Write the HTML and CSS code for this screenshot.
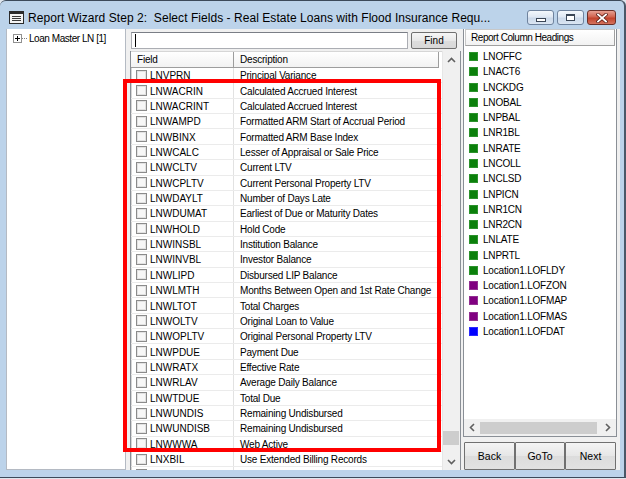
FILE: index.html
```html
<!DOCTYPE html>
<html>
<head>
<meta charset="utf-8">
<title>Report Wizard Step 2</title>
<link rel="stylesheet" href="styles.css">
</head>
<body>
<div class="window">
  <div class="titlebar">
    <svg class="appicon" width="15" height="13" viewBox="0 0 15 13">
      <rect x="0.5" y="1.5" width="14" height="11" fill="#f4f4f4" stroke="#2b2b2b"/>
      <rect x="0" y="0" width="15" height="3" fill="#2b2b2b"/>
      <path d="M3 5.5h9M3 7.5h9M3 9.5h9" stroke="#3a3a3a" stroke-width="1"/>
    </svg>
    <div class="title">Report Wizard Step 2:&nbsp; Select Fields - Real Estate Loans with Flood Insurance Requ...</div>
    <div class="controls">
      <div class="cbtn min"><span class="minbar"></span></div>
      <div class="cbtn max"><span class="maxbox"></span></div>
      <div class="cbtn close">
        <svg width="12" height="10" viewBox="0 0 12 10">
          <path d="M2 1.5l8 7M10 1.5l-8 7" stroke="#5a1f18" stroke-width="3.4" stroke-linecap="square"/>
          <path d="M2 1.5l8 7M10 1.5l-8 7" stroke="#ffffff" stroke-width="1.8" stroke-linecap="square"/>
        </svg>
      </div>
    </div>
  </div>

  <div class="client">
    <div class="tree">
      <div class="node">
        <span class="plus"><span class="ph"></span><span class="pv"></span></span>
        <span class="dots"></span>
        <span class="label">Loan Master LN [1]</span>
      </div>
    </div>

    <div class="middle">
      <div class="search">
        <div class="input"><span class="caret"></span></div>
        <div class="btn find">Find</div>
      </div>
      <div class="grid">
        <div class="table">
          <div class="head">
            <div class="hc c1">Field</div>
            <div class="hc c2">Description</div>
          </div>
          <div class="rows">
            <div class="row"><div class="cell c1"><span class="chk"></span><span class="ft">LNVPRN</span></div><div class="cell c2">Principal Variance</div></div>
            <div class="row"><div class="cell c1"><span class="chk"></span><span class="ft">LNWACRIN</span></div><div class="cell c2">Calculated Accrued Interest</div></div>
            <div class="row"><div class="cell c1"><span class="chk"></span><span class="ft">LNWACRINT</span></div><div class="cell c2">Calculated Accrued Interest</div></div>
            <div class="row"><div class="cell c1"><span class="chk"></span><span class="ft">LNWAMPD</span></div><div class="cell c2">Formatted ARM Start of Accrual Period</div></div>
            <div class="row"><div class="cell c1"><span class="chk"></span><span class="ft">LNWBINX</span></div><div class="cell c2">Formatted ARM Base Index</div></div>
            <div class="row"><div class="cell c1"><span class="chk"></span><span class="ft">LNWCALC</span></div><div class="cell c2">Lesser of Appraisal or Sale Price</div></div>
            <div class="row"><div class="cell c1"><span class="chk"></span><span class="ft">LNWCLTV</span></div><div class="cell c2">Current LTV</div></div>
            <div class="row"><div class="cell c1"><span class="chk"></span><span class="ft">LNWCPLTV</span></div><div class="cell c2">Current Personal Property LTV</div></div>
            <div class="row"><div class="cell c1"><span class="chk"></span><span class="ft">LNWDAYLT</span></div><div class="cell c2">Number of Days Late</div></div>
            <div class="row"><div class="cell c1"><span class="chk"></span><span class="ft">LNWDUMAT</span></div><div class="cell c2">Earliest of Due or Maturity Dates</div></div>
            <div class="row"><div class="cell c1"><span class="chk"></span><span class="ft">LNWHOLD</span></div><div class="cell c2">Hold Code</div></div>
            <div class="row"><div class="cell c1"><span class="chk"></span><span class="ft">LNWINSBL</span></div><div class="cell c2">Institution Balance</div></div>
            <div class="row"><div class="cell c1"><span class="chk"></span><span class="ft">LNWINVBL</span></div><div class="cell c2">Investor Balance</div></div>
            <div class="row"><div class="cell c1"><span class="chk"></span><span class="ft">LNWLIPD</span></div><div class="cell c2">Disbursed LIP Balance</div></div>
            <div class="row"><div class="cell c1"><span class="chk"></span><span class="ft">LNWLMTH</span></div><div class="cell c2">Months Between Open and 1st Rate Change</div></div>
            <div class="row"><div class="cell c1"><span class="chk"></span><span class="ft">LNWLTOT</span></div><div class="cell c2">Total Charges</div></div>
            <div class="row"><div class="cell c1"><span class="chk"></span><span class="ft">LNWOLTV</span></div><div class="cell c2">Original Loan to Value</div></div>
            <div class="row"><div class="cell c1"><span class="chk"></span><span class="ft">LNWOPLTV</span></div><div class="cell c2">Original Personal Property LTV</div></div>
            <div class="row"><div class="cell c1"><span class="chk"></span><span class="ft">LNWPDUE</span></div><div class="cell c2">Payment Due</div></div>
            <div class="row"><div class="cell c1"><span class="chk"></span><span class="ft">LNWRATX</span></div><div class="cell c2">Effective Rate</div></div>
            <div class="row"><div class="cell c1"><span class="chk"></span><span class="ft">LNWRLAV</span></div><div class="cell c2">Average Daily Balance</div></div>
            <div class="row"><div class="cell c1"><span class="chk"></span><span class="ft">LNWTDUE</span></div><div class="cell c2">Total Due</div></div>
            <div class="row"><div class="cell c1"><span class="chk"></span><span class="ft">LNWUNDIS</span></div><div class="cell c2">Remaining Undisbursed</div></div>
            <div class="row"><div class="cell c1"><span class="chk"></span><span class="ft">LNWUNDISB</span></div><div class="cell c2">Remaining Undisbursed</div></div>
            <div class="row"><div class="cell c1"><span class="chk"></span><span class="ft">LNWWWA</span></div><div class="cell c2">Web Active</div></div>
            <div class="row"><div class="cell c1"><span class="chk"></span><span class="ft">LNXBIL</span></div><div class="cell c2">Use Extended Billing Records</div></div>
            <div class="row"><div class="cell c1"><span class="chk"></span></div><div class="cell c2"></div></div>
          </div>
        </div>
        <div class="vscroll">
          <div class="sbtn">
            <svg width="9" height="6" viewBox="0 0 9 6"><path d="M1 5l3.5-3.5L8 5" fill="none" stroke="#606060" stroke-width="1.6"/></svg>
          </div>
          <div class="vtrack"><div class="vthumb"></div></div>
          <div class="sbtn">
            <svg width="9" height="6" viewBox="0 0 9 6"><path d="M1 1l3.5 3.5L8 1" fill="none" stroke="#606060" stroke-width="1.6"/></svg>
          </div>
        </div>
      </div>
    </div>

    <div class="right">
      <div class="list">
        <div class="lhead">Report Column Headings</div>
        <div class="items">
          <div class="item"><span class="sq green"></span>LNOFFC</div>
          <div class="item"><span class="sq green"></span>LNACT6</div>
          <div class="item"><span class="sq green"></span>LNCKDG</div>
          <div class="item"><span class="sq green"></span>LNOBAL</div>
          <div class="item"><span class="sq green"></span>LNPBAL</div>
          <div class="item"><span class="sq green"></span>LNR1BL</div>
          <div class="item"><span class="sq green"></span>LNRATE</div>
          <div class="item"><span class="sq green"></span>LNCOLL</div>
          <div class="item"><span class="sq green"></span>LNCLSD</div>
          <div class="item"><span class="sq green"></span>LNPICN</div>
          <div class="item"><span class="sq green"></span>LNR1CN</div>
          <div class="item"><span class="sq green"></span>LNR2CN</div>
          <div class="item"><span class="sq green"></span>LNLATE</div>
          <div class="item"><span class="sq green"></span>LNPRTL</div>
          <div class="item"><span class="sq green"></span>Location1.LOFLDY</div>
          <div class="item"><span class="sq purple"></span>Location1.LOFZON</div>
          <div class="item"><span class="sq purple"></span>Location1.LOFMAP</div>
          <div class="item"><span class="sq purple"></span>Location1.LOFMAS</div>
          <div class="item"><span class="sq blue"></span>Location1.LOFDAT</div>
        </div>
        <div class="hscroll">
          <div class="hbtn">
            <svg width="6" height="9" viewBox="0 0 6 9"><path d="M5 1L1.5 4.5 5 8" fill="none" stroke="#606060" stroke-width="1.6"/></svg>
          </div>
          <div class="htrack"><div class="hthumb"></div></div>
          <div class="hbtn">
            <svg width="6" height="9" viewBox="0 0 6 9"><path d="M1 1l3.5 3.5L1 8" fill="none" stroke="#606060" stroke-width="1.6"/></svg>
          </div>
        </div>
      </div>
      <div class="buttons">
        <div class="btn nav back">Back</div>
        <div class="btn nav goto">GoTo</div>
        <div class="btn nav next">Next</div>
      </div>
    </div>
  </div>

  <div class="redbox"></div>
</div>
</body>
</html>
```

FILE: styles.css
```css
* { box-sizing: border-box; }
html, body { margin: 0; padding: 0; }
body {
  background: #dfe6ee;
  font-family: "Liberation Sans", Arial, sans-serif;
  font-size: 10px;
  color: #000;
  width: 626px;
  height: 479px;
  overflow: hidden;
}

.window {
  position: relative;
  width: 626px;
  height: 478px;
  background: #bcd3ea;
  border-top: 1px solid #3c4a5a;
  border-right: 2px solid #4a5868;
  border-bottom: 1px solid #3c4a5a;
  border-radius: 6px 6px 0 0;
  display: flex;
  flex-direction: column;
  overflow: hidden;
}

/* title bar */
.titlebar {
  height: 28px;
  flex: none;
  display: flex;
  align-items: center;
  padding: 5px 8px 0 9px;
}
.appicon { flex: none; display: block; }
.title {
  margin-left: 4px;
  font-size: 12px;
  letter-spacing: 0.05px;
  white-space: nowrap;
  color: #000;
}
.controls {
  margin-left: auto;
  display: flex;
  gap: 3px;
  align-self: center;
}
.cbtn {
  width: 27px;
  height: 15px;
  border: 1px solid #6f839e;
  border-radius: 3px;
  background: linear-gradient(#f3f7fc, #dfe8f3 45%, #cbd9ea 55%, #dbe6f3);
  display: flex;
  align-items: center;
  justify-content: center;
}
.cbtn.close {
  width: 29px;
  border-color: #6b2f28;
  background: linear-gradient(#e6a092, #d16450 45%, #c1432c 55%, #d5735e);
}
.minbar {
  width: 10px;
  height: 4px;
  margin-top: 5px;
  border: 1px solid #3a4656;
  background: #fff;
}
.maxbox {
  width: 9px;
  height: 7px;
  border: 1px solid #3a4656;
  border-top-width: 2px;
  background: #fff;
}

/* client */
.client {
  height: 441px;
  flex: none;
  margin: 0 4px 0 6px;
  background: #f0f0f0;
  display: flex;
}

.tree {
  width: 120px;
  flex: none;
  background: #fff;
  border: 1px solid #b4bac3;
  border-top: none;
}
.node {
  margin-top: 1px;
  height: 16px;
  display: flex;
  align-items: center;
  padding-left: 6px;
}
.plus {
  position: relative;
  width: 9px;
  height: 9px;
  border: 1px solid #919191;
  background: #fff;
  flex: none;
}
.plus .ph { position: absolute; left: 1px; top: 3px; width: 5px; height: 1px; background: #000; }
.plus .pv { position: absolute; left: 3px; top: 1px; width: 1px; height: 5px; background: #000; }
.dots {
  width: 5px;
  border-top: 1px dotted #808080;
  flex: none;
}
.label {
  margin-left: 2px;
  font-size: 10px;
  letter-spacing: -0.45px;
  white-space: nowrap;
}

/* middle */
.middle {
  width: 331px;
  flex: none;
  margin-left: 4px;
  display: flex;
  flex-direction: column;
}
.search {
  height: 22px;
  flex: none;
  display: flex;
  align-items: flex-start;
  padding: 3px 0 0 1px;
}
.input {
  width: 277px;
  height: 17px;
  background: #fff;
  border: 1px solid #abadb3;
  border-top-color: #7a7e86;
  position: relative;
}
.caret {
  position: absolute;
  left: 3px;
  top: 1px;
  width: 1px;
  height: 13px;
  background: #000;
}
.btn {
  display: flex;
  align-items: center;
  justify-content: center;
  border: 1px solid #707070;
  border-radius: 2px;
  background: linear-gradient(#f6f6f6, #e8e8e8 50%, #dddddd 51%, #d8d8d8);
  color: #000;
  white-space: nowrap;
}
.find {
  margin-left: 3px;
  width: 46px;
  height: 17px;
  font-size: 10px;
}

.grid {
  flex: 1;
  display: flex;
  background: #fff;
  border-left: 1px solid #8a8f96;
  border-right: 1px solid #8a8f96;
  min-height: 0;
}
.table {
  width: 311px;
  flex: none;
  display: flex;
  flex-direction: column;
  overflow: hidden;
}
.head {
  height: 17px;
  flex: none;
  display: flex;
  border-top: 1px solid #d6d6d6;
}
.hc {
  height: 16px;
  line-height: 15px;
  padding-left: 6px;
  background: linear-gradient(#ffffff, #f2f2f2);
  border-right: 1px solid #9d9d9d;
  border-bottom: 1px solid #9d9d9d;
  letter-spacing: -0.2px;
}
.hc.c1 { width: 103px; }
.hc.c2 { width: 205px; }
.rows { flex: 1; overflow: hidden; }
.row {
  height: 15.36px;
  display: flex;
  border-bottom: 1px solid #ebebeb;
}
.cell {
  display: flex;
  align-items: center;
  white-space: nowrap;
  letter-spacing: -0.2px;
  padding-top: 1px;
}
.cell.c1 {
  width: 103px;
  border-right: 1px solid #e2e2e2;
  border-left: 1px solid #d6d6d6;
  padding-left: 4px;
}
.cell.c2 {
  padding-left: 6px;
  flex: 1;
}
.chk {
  width: 11px;
  height: 11px;
  flex: none;
  margin-top: -1px;
  border: 1px solid #8b8b8b;
  background: #f7f7f7;
  box-shadow: inset 0 0 0 1px #e2e2e2;
}
.ft { margin-left: 3px; letter-spacing: 0; }

.vscroll {
  width: 18px;
  flex: none;
  display: flex;
  flex-direction: column;
  background: #f0f0f0;
  border-left: 1px solid #e6e6e6;
}
.sbtn {
  height: 17px;
  flex: none;
  display: flex;
  align-items: center;
  justify-content: center;
}
.vtrack {
  flex: 1;
  display: flex;
  flex-direction: column;
  justify-content: flex-end;
  padding: 0 1px 8px 0;
}
.vthumb {
  height: 14px;
  background: #cdcdcd;
}

/* right panel */
.right {
  width: 154px;
  flex: none;
  margin-left: 2px;
  display: flex;
  flex-direction: column;
}
.list {
  height: 408px;
  flex: none;
  background: #fff;
  border: 1px solid #8a8f96;
  border-top: none;
  display: flex;
  flex-direction: column;
}
.lhead {
  height: 17px;
  flex: none;
  margin: 0 1px;
  padding-left: 5px;
  line-height: 15px;
  border: 1px solid #c8c8c8;
  border-right-color: #a0a0a0;
  border-bottom-color: #a0a0a0;
  background: linear-gradient(#ffffff, #f2f2f2);
  letter-spacing: -0.45px;
  white-space: nowrap;
}
.items { padding-top: 3px; }
.item {
  height: 15.28px;
  display: flex;
  align-items: center;
  padding-left: 5px;
  white-space: nowrap;
  letter-spacing: -0.2px;
}
.sq {
  width: 9px;
  height: 9px;
  flex: none;
  margin-right: 5px;
}
.sq.green { background: #0b800b; border: 1px solid #2c922c; }
.sq.purple { background: #800080; border: 1px solid #923092; }
.sq.blue { background: #0000ff; border: 1px solid #2a2aff; }

.hscroll {
  margin-top: auto;
  height: 17px;
  flex: none;
  display: flex;
  background: #f0f0f0;
}
.hbtn {
  width: 16px;
  flex: none;
  display: flex;
  align-items: center;
  justify-content: center;
}
.htrack {
  flex: 1;
  display: flex;
  align-items: center;
}
.hthumb {
  width: 117px;
  height: 12px;
  background: #cdcdcd;
}

.buttons {
  margin-top: 5px;
  height: 28px;
  flex: none;
  display: flex;
  padding-left: 1px;
}
.nav {
  height: 28px;
  font-size: 10.5px;
  border-radius: 1px;
  background: linear-gradient(#f4f4f4, #e6e6e6 50%, #dcdcdc 51%, #e2e2e2);
}
.back { width: 51px; }
.goto { width: 50px; }
.next { width: 51px; }

/* annotation overlay */
.redbox {
  position: absolute;
  left: 123px;
  top: 78px;
  width: 318px;
  height: 373px;
  border: 4px solid #ff0000;
  pointer-events: none;
}
```
